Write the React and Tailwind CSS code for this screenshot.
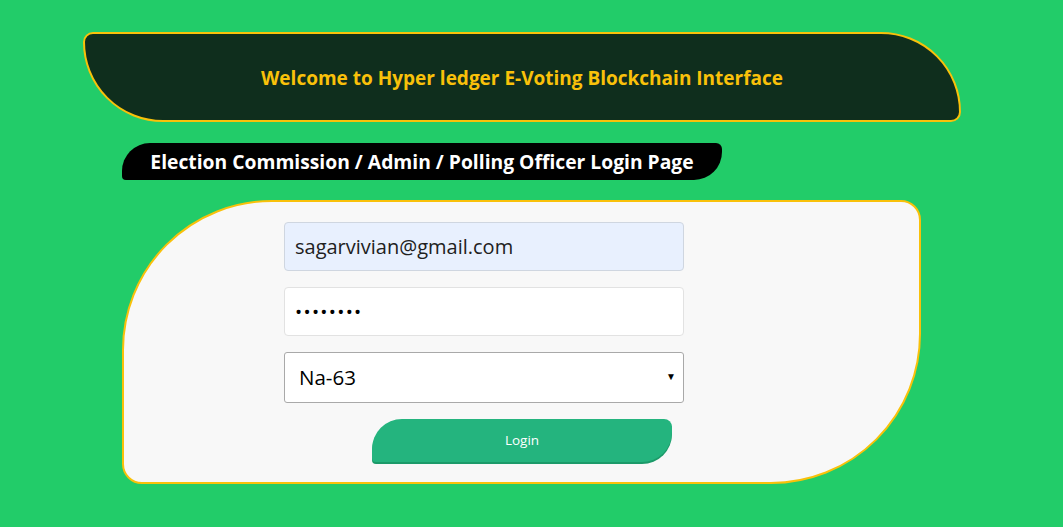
export default function App() {
  return (
    <div className="min-h-screen bg-[#22cc69] font-['Open_Sans',sans-serif] pt-[32px] pb-10">
      <header className="ml-[83px] w-[878px] h-[90px] bg-[#0f2e1d] border-2 border-[#f9c10a] rounded-tl-[10px] rounded-tr-[80px] rounded-br-[10px] rounded-bl-[80px] flex items-center justify-center">
        <h1 className="text-[#f9c10a] font-bold text-[19px] mt-[3px]">
          Welcome to Hyper ledger E-Voting Blockchain Interface
        </h1>
      </header>

      <div className="ml-[122px] mt-[21px] w-[600px] h-[37px] bg-black rounded-tl-[28px] rounded-tr-[6px] rounded-br-[28px] rounded-bl-[4px] flex items-center justify-center">
        <h2 className="text-white font-bold text-[19.3px] mt-[2px]">
          Election Commission / Admin / Polling Officer Login Page
        </h2>
      </div>

      <main className="ml-[122px] mt-[20px] w-[799px] h-[284px] bg-[#f8f8f8] border-2 border-[#f9c10a] rounded-tl-[150px] rounded-tr-[20px] rounded-br-[150px] rounded-bl-[20px] pl-[160px] pt-[20px]">
        <div className="w-[400px] flex flex-col gap-4">
          <input
            type="email"
            readOnly
            value="sagarvivian@gmail.com"
            className="h-[49px] w-full rounded bg-[#e8f0fe] border border-[#cfd6e0] px-[10px] text-[20px] text-[#212121] outline-none"
          />
          <input
            type="password"
            readOnly
            value="12345678"
            className="h-[49px] w-full rounded bg-white border border-[#e2e2e2] px-[10px] text-[19px] text-black outline-none tracking-[1.3px]"
          />
          <div className="relative">
            <select
              defaultValue="Na-63"
              className="appearance-none h-[51px] w-full rounded-[3px] bg-white border border-[#a9a9a9] pl-[14px] text-[20.5px] text-black outline-none"
            >
              <option>Na-63</option>
            </select>
            <span className="absolute right-[8px] top-[17px] text-[10px] text-black pointer-events-none">▼</span>
          </div>
          <button className="ml-[88px] w-[300px] h-[43px] bg-[#24b47e] text-white text-[13.5px] rounded-tl-[30px] rounded-tr-[8px] rounded-br-[30px] rounded-bl-[4px] shadow-[0_2px_0_#1c9a69]">
            Login
          </button>
        </div>
      </main>
    </div>
  )
}
